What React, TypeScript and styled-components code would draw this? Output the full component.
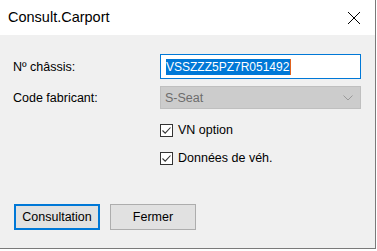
import React from "react";
import styled, { createGlobalStyle } from "styled-components";

const GlobalStyle = createGlobalStyle`
  body {
    margin: 0;
    background: #ffffff;
    font-family: "Segoe UI", "Liberation Sans", "Noto Sans", sans-serif;
  }
`;

const Window = styled.div`
  width: 375px;
  height: 248px;
  display: flex;
  flex-direction: column;
  background: #f0f0f0;
  border-right: 1px solid #7a7a7a;
  border-bottom: 1px solid #7a7a7a;
`;

const TitleBar = styled.div`
  height: 35px;
  flex: none;
  display: flex;
  align-items: center;
  justify-content: space-between;
  background: #ffffff;
  padding: 0 14px 0 8px;
`;

const Title = styled.span`
  font-size: 14.5px;
  color: #000;
  padding-bottom: 1px;
`;

const CloseButton = styled.span`
  display: flex;
  width: 14px;
  height: 14px;
`;

const Body = styled.div`
  flex: 1;
  display: flex;
  flex-direction: column;
  padding: 19px 0 0 13px;
`;

const Form = styled.div`
  display: grid;
  grid-template-columns: 147px 201px;
  grid-template-rows: 25px 23px;
  row-gap: 7px;
  align-items: center;
`;

const Label = styled.label`
  font-size: 12.5px;
  color: #000;
`;

const TextBox = styled.div`
  height: 25px;
  box-sizing: border-box;
  border: 1px solid #0078d7;
  background: #fff;
  display: flex;
  align-items: center;
  padding-left: 5px;
`;

const Selected = styled.span`
  background: #0078d7;
  color: #fff;
  font-size: 12px;
  line-height: 16px;
  padding-right: 1px;
  border-right: 1px solid #e0621e;
`;

const Combo = styled.div`
  height: 23px;
  box-sizing: border-box;
  border: 1px solid #bfbfbf;
  background: #cccccc;
  display: flex;
  align-items: center;
  justify-content: space-between;
  padding: 0 7px 0 4px;
  font-size: 12.5px;
  color: #6d6d6d;
`;

const Checks = styled.div`
  display: flex;
  flex-direction: column;
  gap: 14px;
  margin: 14px 0 0 147px;
`;

const CheckRow = styled.div`
  display: flex;
  align-items: center;
  gap: 5px;
  height: 14px;
  font-size: 12.5px;
  color: #000;
`;

const Box = styled.span`
  width: 13px;
  height: 13px;
  box-sizing: border-box;
  border: 1px solid #333;
  background: #fff;
  display: flex;
  align-items: center;
  justify-content: center;
`;

const Buttons = styled.div`
  display: flex;
  gap: 10px;
  margin-top: 39px;
  padding-left: 1px;
`;

const Button = styled.button<{ $primary?: boolean }>`
  width: 86px;
  height: 26px;
  box-sizing: border-box;
  border: ${(p) => (p.$primary ? "2px solid #0078d7" : "1px solid #adadad")};
  background: #e1e1e1;
  font-family: inherit;
  font-size: 12.5px;
  color: #000;
  padding: 0;
`;

const Check = () => (
  <svg width="11" height="11" viewBox="0 0 11 11">
    <path d="M1.5 5.5 L4.2 8.2 L9.5 2.5" fill="none" stroke="#333" strokeWidth="1.1" />
  </svg>
);

export default function App() {
  return (
    <>
      <GlobalStyle />
      <Window>
        <TitleBar>
          <Title>Consult.Carport</Title>
          <CloseButton>
            <svg width="14" height="14" viewBox="0 0 14 14">
              <path d="M1 1 L13 13 M13 1 L1 13" stroke="#000" strokeWidth="1" />
            </svg>
          </CloseButton>
        </TitleBar>
        <Body>
          <Form>
            <Label>Nº châssis:</Label>
            <TextBox>
              <Selected>VSSZZZ5PZ7R051492</Selected>
            </TextBox>
            <Label>Code fabricant:</Label>
            <Combo>
              S-Seat
              <svg width="10" height="6" viewBox="0 0 10 6">
                <path d="M0.5 0.5 L5 5 L9.5 0.5" fill="none" stroke="#9a9a9a" strokeWidth="1" />
              </svg>
            </Combo>
          </Form>
          <Checks>
            <CheckRow>
              <Box><Check /></Box>
              VN option
            </CheckRow>
            <CheckRow>
              <Box><Check /></Box>
              Données de véh.
            </CheckRow>
          </Checks>
          <Buttons>
            <Button $primary>Consultation</Button>
            <Button>Fermer</Button>
          </Buttons>
        </Body>
      </Window>
    </>
  );
}
